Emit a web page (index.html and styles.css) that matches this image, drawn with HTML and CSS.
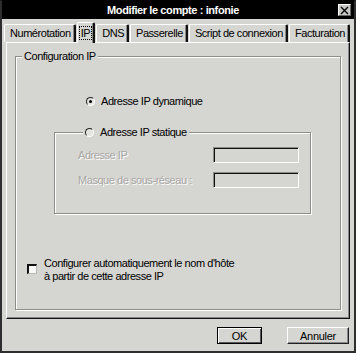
FILE: index.html
```html
<!DOCTYPE html>
<html lang="fr">
<head>
    <meta charset="UTF-8">
    <title>Modifier le compte</title>
    <link rel="stylesheet" href="styles.css">
</head>
<body>
    <div class="window">
        <div class="titlebar">
            <span class="title">Modifier le compte : infonie</span>
            <span class="close-btn">
                <svg width="9" height="9" viewBox="0 0 9 9"><path d="M1 1L8 8M8 1L1 8" stroke="#000" stroke-width="1.4"/></svg>
            </span>
        </div>

        <div class="tabs">
            <div class="tab">Numérotation</div>
            <div class="tab active"><span class="focus">IP</span></div>
            <div class="tab">DNS</div>
            <div class="tab">Passerelle</div>
            <div class="tab">Script de connexion</div>
            <div class="tab">Facturation</div>
        </div>

        <div class="panel">
            <fieldset class="group">
                <legend>Configuration IP</legend>

                <div class="option dynamic">
                    <span class="radio checked"></span>
                    <span>Adresse IP dynamique</span>
                </div>

                <fieldset class="group static">
                    <legend>
                        <span class="option">
                            <span class="radio"></span>
                            <span>Adresse IP statique</span>
                        </span>
                    </legend>
                    <div class="fields">
                        <label class="disabled">Adresse IP</label>
                        <input type="text" disabled>
                        <label class="disabled">Masque de sous-réseau :</label>
                        <input type="text" disabled>
                    </div>
                </fieldset>

                <div class="option check-row">
                    <span class="checkbox"></span>
                    <span>Configurer automatiquement le nom d'hôte<br>à partir de cette adresse IP</span>
                </div>
            </fieldset>
        </div>

        <div class="footer">
            <button class="btn default">OK</button>
            <button class="btn">Annuler</button>
        </div>
    </div>
</body>
</html>
```

FILE: styles.css
```css
html, body {
    margin: 0;
    padding: 0;
}

body {
    width: 356px;
    height: 353px;
    overflow: hidden;
    font-family: "Liberation Sans", Arial, sans-serif;
    font-size: 11px;
    letter-spacing: -0.45px;
    color: #000;
}

.window {
    box-sizing: border-box;
    width: 356px;
    height: 353px;
    background: #d5d5d1;
    border: 2px solid #2e2e2e;
    border-top: 1px solid #000;
    display: flex;
    flex-direction: column;
}

.titlebar {
    height: 18px;
    background: #000;
    display: flex;
    align-items: center;
    padding-right: 3px;
}

.titlebar .title {
    flex: 1;
    text-align: center;
    padding-left: 6px;
    color: #fff;
    font-weight: bold;
    letter-spacing: -0.4px;
}

.close-btn {
    width: 11px;
    height: 10px;
    background: #c8c8c4;
    border: 1px solid #fff;
    border-right-color: #666;
    border-bottom-color: #666;
    display: flex;
    align-items: center;
    justify-content: center;
}

/* tabs */
.tabs {
    display: flex;
    align-items: flex-end;
    margin-top: 3px;
    padding-left: 2px;
    height: 20px;
    position: relative;
    z-index: 1;
}

.tab {
    box-sizing: border-box;
    height: 18px;
    line-height: 16px;
    padding: 0 3px 0 5px;
    margin-right: 1px;
    border-top: 1px solid #fff;
    border-left: 1px solid #fff;
    border-right: 2px solid #111;
    box-shadow: inset -1px 0 #888;
    border-radius: 2px 2px 0 0;
    white-space: nowrap;
}

.tab.active {
    height: 21px;
    margin: 0 1px -1px 0;
    padding: 2px 2px 0 2px;
    background: #d5d5d1;
}

.tab .focus {
    outline: 1px dotted #000;
    padding: 0 1px;
}

/* main panel */
.panel {
    box-sizing: border-box;
    height: 277px;
    margin: 0 4px 0 4px;
    padding: 7px 7px 7px 8px;
    border: 1px solid #fff;
    border-right-color: #111;
    border-bottom-color: #111;
    box-shadow: inset -1px -1px #888;
    display: flex;
    flex-direction: column;
}

.group {
    margin: 0;
    padding: 0;
    min-width: 0;
    border: 1px solid #8c8c88;
    box-shadow: inset 1px 1px #fff, 1px 1px #fff;
}

.panel > .group {
    flex: 1;
    margin-bottom: 1px;
    margin-right: 1px;
}

.group legend {
    margin-left: 6px;
    padding: 0 2px;
    line-height: 13px;
    background: #d5d5d1;
}

.option {
    display: flex;
    align-items: center;
    line-height: 13px;
}

.dynamic {
    margin: 32px 0 0 70px;
    gap: 6px;
}

.radio {
    box-sizing: border-box;
    width: 9px;
    height: 9px;
    border-radius: 50%;
    border: 1px solid #fff;
    border-top-color: #222;
    border-left-color: #222;
    background: #e4e4e0;
    display: flex;
    align-items: center;
    justify-content: center;
    flex: none;
}

.radio.checked::after {
    content: "";
    width: 3px;
    height: 3px;
    border-radius: 50%;
    background: #000;
}

.static {
    margin: 18px 29px 0 38px;
}

.static legend {
    margin-left: 28px;
}

.static .option {
    gap: 6px;
}

.fields {
    display: grid;
    grid-template-columns: 1fr 86px;
    row-gap: 9px;
    align-items: center;
    padding: 8px 11px 25px 23px;
}

.fields input {
    box-sizing: border-box;
    width: 86px;
    height: 16px;
    margin: 0;
    padding: 0;
    background: #d5d5d1;
    border: 1px solid #fff;
    border-top-color: #8a8a86;
    border-left-color: #8a8a86;
    box-shadow: inset 1px 1px #111;
}

.disabled {
    color: #a6a6a2;
    text-shadow: 1px 1px #fff;
}

.check-row {
    align-items: flex-start;
    margin: 43px 0 0 11px;
    gap: 7px;
}

.checkbox {
    box-sizing: border-box;
    width: 10px;
    height: 10px;
    margin-top: 7px;
    background: #f8f8f6;
    border: 1px solid #b8b8b4;
    border-top: 2px solid #111;
    border-left: 2px solid #111;
    flex: none;
}

/* buttons */
.footer {
    display: flex;
    justify-content: flex-end;
    gap: 25px;
    margin-top: 8px;
    padding-right: 5px;
}

.btn {
    box-sizing: border-box;
    height: 17px;
    padding: 0;
    font-family: inherit;
    font-size: 11px;
    letter-spacing: -0.3px;
    color: #000;
    background: #d5d5d1;
    border: 1px solid #fff;
    border-right-color: #222;
    border-bottom-color: #222;
    box-shadow: inset -1px -1px #888;
    width: 62px;
}

.btn.default {
    width: 45px;
    border-color: #000;
    box-shadow: inset 1px 1px #fff, inset -1px -1px #555;
}
```
